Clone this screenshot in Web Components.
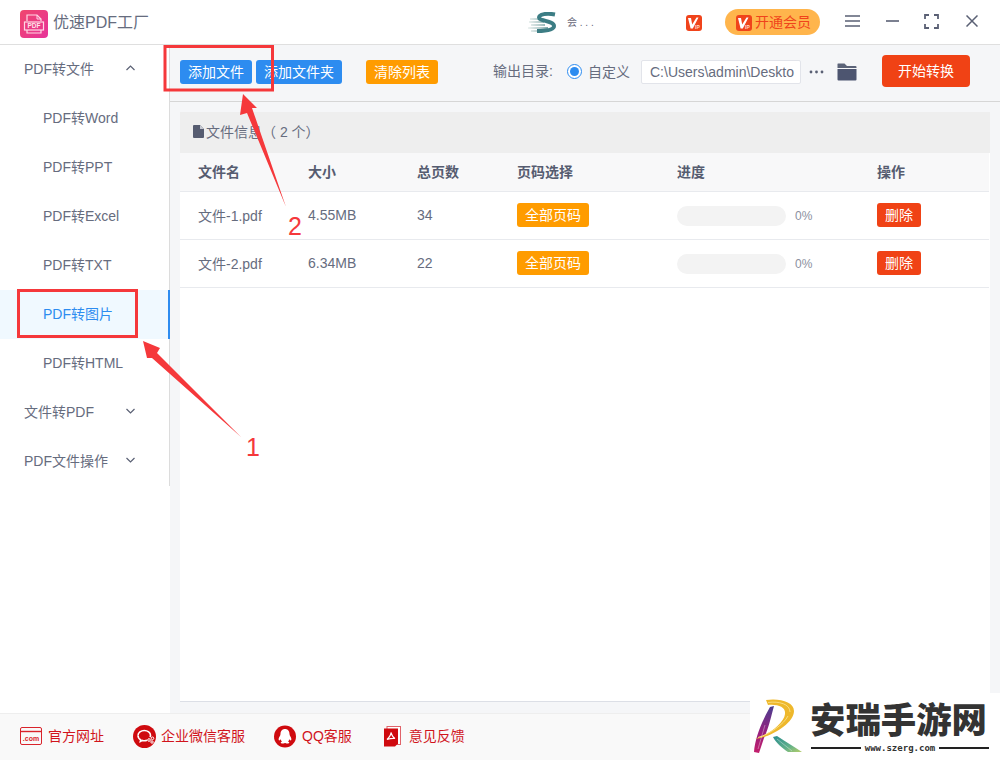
<!DOCTYPE html>
<html lang="zh">
<head>
<meta charset="utf-8">
<title>优速PDF工厂</title>
<style>
  html, body {
    margin: 0;
    background: #fff;
  }
</style>
</head>
<body>
<app-window>
  <title-bar slot="top"></title-bar>
  <side-nav slot="side">
    <nav-item kind="group" arrow="up">PDF转文件</nav-item>
    <nav-item>PDF转Word</nav-item>
    <nav-item>PDF转PPT</nav-item>
    <nav-item>PDF转Excel</nav-item>
    <nav-item>PDF转TXT</nav-item>
    <nav-item active>PDF转图片</nav-item>
    <nav-item>PDF转HTML</nav-item>
    <nav-item kind="group" arrow="down">文件转PDF</nav-item>
    <nav-item kind="group" arrow="down">PDF文件操作</nav-item>
  </side-nav>
  <tool-bar slot="tools"></tool-bar>
  <file-panel slot="content">
    <file-row name="文件-1.pdf" size="4.55MB" pages="34"></file-row>
    <file-row name="文件-2.pdf" size="6.34MB" pages="22"></file-row>
  </file-panel>
  <foot-bar slot="bottom">
    <foot-link icon="web">官方网址</foot-link>
    <foot-link icon="wechat">企业微信客服</foot-link>
    <foot-link icon="qq">QQ客服</foot-link>
    <foot-link icon="doc">意见反馈</foot-link>
  </foot-bar>
  <site-mark slot="over"></site-mark>
  <mark-overlay slot="over"></mark-overlay>
</app-window>

<script>
const FONT = '"Liberation Sans", "Noto Sans CJK SC", sans-serif'

const vipIcon = `<svg viewBox="0 0 16 16" width="16" height="16">
  <rect x="0" y="0" width="16" height="16" rx="3" fill="#f0431b"/>
  <path d="M2 3h3l1.200 6.500L10.500 2.500h2L6.800 13.500H4.600z" fill="#fff"/>
  <text x="9" y="13.500" font-size="5" font-weight="700" fill="#ffd9c8" font-family="Liberation Sans">IP</text>
</svg>`

class AppWindow extends HTMLElement {
  static body = `<style>
    :host {
      display: grid;
      position: relative;
      width: 1000px;
      height: 760px;
      overflow: hidden;
      grid-template-columns: 170px 1fr;
      grid-template-rows: 45px 57px 1fr 47px;
      font-family: ${FONT};
      color: #5e6478;
      background: #f5f6f8;
    }
    .top { grid-column: 1 / 3; grid-row: 1; display: grid; }
    .side { grid-column: 1; grid-row: 2 / 4; display: grid; background: #fff; }
    .tools { grid-column: 2; grid-row: 2; display: grid; }
    .content { grid-column: 2; grid-row: 3; display: grid; min-height: 0; }
    .bottom { grid-column: 1 / 3; grid-row: 4; display: grid; }
  </style>
  <div class="top"><slot name="top"></slot></div>
  <div class="side"><slot name="side"></slot></div>
  <div class="tools"><slot name="tools"></slot></div>
  <div class="content"><slot name="content"></slot></div>
  <div class="bottom"><slot name="bottom"></slot></div>
  <slot name="over"></slot>`

  constructor() {
    super()
    this.attachShadow({mode: 'open'})
    this.shadowRoot.innerHTML = AppWindow.body
  }
}

class TitleBar extends HTMLElement {
  static body = `<style>
    :host {
      display: flex;
      align-items: center;
      height: 45px;
      box-sizing: border-box;
      padding-bottom: 2px;
      background: #fff;
      border-bottom: 1px solid #dfdfdf;
    }
    .logo { margin: 5px 0 0 20px; display: block; }
    .name { margin-left: 5px; font-size: 16px; color: #666c7e; }
    .brand { margin: 3px 0 0 379px; display: block; }
    .user { margin-left: 10px; width: 34px; font-size: 10px; color: #667; white-space: nowrap; }
    .vip { margin: 3px 0 0 85px; display: flex; }
    .pill {
      margin: 1px 0 0 23px;
      width: 95px;
      height: 26px;
      box-sizing: border-box;
      padding: 0 0 2px 11px;
      display: flex;
      align-items: center;
      gap: 3px;
      border-radius: 13px;
      background: #ffb54c;
      color: #f0431b;
      font-size: 14px;
      white-space: nowrap;
    }
    .pill svg { display: block; flex: none; margin-top: 4px; }
    .ctl { display: block; fill: none; stroke: #5a6074; }
  </style>
  <svg class="logo" width="28" height="28" viewBox="0 0 28 28">
    <defs>
      <linearGradient id="lg" x1="0" y1="0" x2="1" y2="1">
        <stop offset="0" stop-color="#f0476d"/><stop offset="1" stop-color="#e7339a"/>
      </linearGradient>
    </defs>
    <rect width="28" height="28" rx="4" fill="url(#lg)"/>
    <path d="M7 11V5h10l4 4v2M7 20v3h14v-3" fill="none" stroke="#ffd7e4" stroke-width="1.2"/>
    <path d="M17 5v4h4" fill="none" stroke="#ffd7e4" stroke-width="1"/>
    <rect x="4.5" y="12" width="19" height="8" fill="none" stroke="#ffd7e4" stroke-width="1.2"/>
    <text x="14" y="18.4" text-anchor="middle" font-size="6.5" font-weight="700" fill="#ffe3ec" font-family="Liberation Sans">PDF</text>
  </svg>
  <div class="name">优速PDF工厂</div>
  <svg class="brand" width="29" height="21" viewBox="0 0 29 21">
    <defs>
      <linearGradient id="sg" x1="0" y1="0" x2="1" y2="0">
        <stop offset="0" stop-color="#eef3f2"/><stop offset="0.7" stop-color="#a9c4c4"/><stop offset="1" stop-color="#6f9fa2"/>
      </linearGradient>
    </defs>
    <path d="M2 7h12M1 10h15M3 13h14M0 16h20M3 19h18" stroke="url(#sg)" stroke-width="2" fill="none"/>
    <path d="M27 2.500C19 1 11 2 11 5.500c0 3.500 15 3.500 15 8.500 0 4-9 5-17 5" fill="none" stroke="#3c7d84" stroke-width="4"/>
  </svg>
  <div class="user">会 . . .</div>
  <div class="vip">${vipIcon}</div>
  <div class="pill">${vipIcon}<span>开通会员</span></div>
  <svg class="ctl" style="margin-left:25px" width="15" height="12" viewBox="0 0 15 12" stroke-width="1.6"><path d="M0 1h15M0 6h15M0 11h15"/></svg>
  <svg class="ctl" style="margin-left:26px" width="13" height="12" viewBox="0 0 13 12" stroke-width="1.6"><path d="M0 6h13"/></svg>
  <svg class="ctl" style="margin-left:25px" width="15" height="15" viewBox="0 0 15 15" stroke-width="1.8"><path d="M1 5V1h4M10 1h4v4M14 10v4h-4M5 14H1v-4"/></svg>
  <svg class="ctl" style="margin-left:27px" width="12" height="12" viewBox="0 0 12 12" stroke-width="1.5"><path d="M0.5 0.5l11 11M11.500 0.5l-11 11"/></svg>`

  constructor() {
    super()
    this.attachShadow({mode: 'open'})
    this.shadowRoot.innerHTML = TitleBar.body
  }
}

class SideNav extends HTMLElement {
  static body = `<style>
    :host {
      display: block;
      background: #fff;
    }
    .list {
      border-right: 1px solid #dcdcdc;
    }
  </style>
  <div class="list"><slot></slot></div>`

  constructor() {
    super()
    this.attachShadow({mode: 'open'})
    this.shadowRoot.innerHTML = SideNav.body
  }
}

class NavItem extends HTMLElement {
  static body = `<style>
    :host {
      display: flex;
      align-items: center;
      height: 49px;
      box-sizing: border-box;
      padding-left: 43px;
      padding-bottom: 4px;
      font-size: 14px;
      color: #666c7e;
      white-space: nowrap;
    }
    :host([kind="group"]) {
      padding-left: 24px;
      justify-content: space-between;
      padding-right: 34px;
    }
    :host([active]) {
      margin-right: -1px;
      color: #2d8cf0;
      background: #f0f9ff;
      border-right: 2px solid #2d8cf0;
    }
    svg { display: block; fill: none; stroke: #5a6074; stroke-width: 1.2; }
  </style>
  <slot></slot><span class="arrow"></span>`

  constructor() {
    super()
    this.attachShadow({mode: 'open'})
    this.shadowRoot.innerHTML = NavItem.body
  }

  connectedCallback() {
    const arrow = this.getAttribute('arrow')
    if (arrow) {
      const d = arrow === 'up' ? 'M.5 5L4.500 1l4 4' : 'M.5 1l4 4 4-4'
      this.shadowRoot.querySelector('.arrow').innerHTML =
        `<svg width="9" height="6" viewBox="0 0 9 6"><path d="${d}"/></svg>`
    }
  }
}

class UiButton extends HTMLElement {
  static body = `<style>
    :host {
      display: inline-flex;
      align-items: center;
      justify-content: center;
      height: 24px;
      box-sizing: border-box;
      padding-bottom: 2px;
      border-radius: 3px;
      background: var(--bg, #2d8cf0);
      color: #fff;
      font-size: 14px;
      white-space: nowrap;
    }
  </style>
  <slot></slot>`

  constructor() {
    super()
    this.attachShadow({mode: 'open'})
    this.shadowRoot.innerHTML = UiButton.body
  }
}

class ToolBar extends HTMLElement {
  static body = `<style>
    :host {
      display: flex;
      align-items: center;
      box-sizing: border-box;
      height: 57px;
      padding-left: 10px;
      background: #f5f6f8;
      border-bottom: 1px solid #d6d6d6;
      font-size: 14px;
      color: #666c7e;
      white-space: nowrap;
    }
    .add { width: 72px; margin-top: -2px; }
    .addf { width: 86px; margin-left: 4px; margin-top: -2px; --bg: #2d8cf0; }
    .clear { width: 72px; margin-left: 24px; margin-top: -2px; --bg: #ff9c00; }
    .label { margin-left: 55px; width: 74px; margin-top: -6px; }
    .radio {
      width: 15px;
      height: 15px;
      box-sizing: border-box;
      border: 1.5px solid #2d8cf0;
      border-radius: 50%;
      background: #fff;
      display: grid;
      place-items: center;
      margin-top: -3px;
    }
    .radio i {
      width: 9px;
      height: 9px;
      border-radius: 50%;
      background: #2d8cf0;
    }
    .custom { margin-left: 6px; margin-top: -5px; width: 53px; }
    .path {
      width: 160px;
      height: 24px;
      box-sizing: border-box;
      padding: 0 7px 0 8px;
      line-height: 23px;
      overflow: hidden;
      background: #fff;
      border: 1px solid #e2e4ea;
      border-radius: 2px;
      margin-top: -3px;
      color: #666c7e;
    }
    .dots { margin-left: 8px; margin-top: -3px; display: block; }
    .folder { margin-left: 13px; margin-top: -3px; display: block; }
    .start { width: 88px; height: 32px; margin-left: 25px; margin-top: -4px; border-radius: 4px; --bg: #f04215; }
  </style>
  <ui-button class="add">添加文件</ui-button>
  <ui-button class="addf">添加文件夹</ui-button>
  <ui-button class="clear">清除列表</ui-button>
  <span class="label">输出目录:</span>
  <span class="radio"><i></i></span>
  <span class="custom">自定义</span>
  <div class="path">C:\\Users\\admin\\Deskto</div>
  <svg class="dots" width="15" height="4" viewBox="0 0 15 4" fill="#5a6074"><circle cx="2" cy="2" r="1.4"/><circle cx="7.5" cy="2" r="1.4"/><circle cx="13" cy="2" r="1.4"/></svg>
  <svg class="folder" width="20" height="18" viewBox="0 0 20 18"><path d="M1 0.5h6.5L10 3h8.5a1 1 0 0 1 1 1v1H0.5V1a.5.5 0 0 1 .5-.5z" fill="#5b6378"/><path d="M0.5 6h19v10.5a1 1 0 0 1-1 1h-17a1 1 0 0 1-1-1z" fill="#4d5570"/></svg>
  <ui-button class="start">开始转换</ui-button>`

  constructor() {
    super()
    this.attachShadow({mode: 'open'})
    this.shadowRoot.innerHTML = ToolBar.body
  }
}

const COLUMNS = '110px 109px 100px 160px 200px 1fr'

class FilePanel extends HTMLElement {
  static body = `<style>
    :host {
      display: block;
      padding: 10px 10px 11px;
      min-height: 0;
    }
    .card {
      height: 100%;
      box-sizing: border-box;
      background: #fff;
      border-bottom: 1px solid #dcdfe6;
    }
    .info {
      display: flex;
      align-items: center;
      height: 41px;
      box-sizing: border-box;
      padding: 0 0 3px 13px;
      gap: 2px;
      background: #eeeeee;
      font-size: 14px;
      color: #666c7e;
    }
    .info svg { display: block; margin-top: 1px; }
    .head {
      display: grid;
      grid-template-columns: ${COLUMNS};
      align-items: center;
      height: 39px;
      box-sizing: border-box;
      margin-right: 1px;
      padding: 0 0 2px 18px;
      background: #f8f8f9;
      border-bottom: 1px solid #e8eaee;
      font-size: 14px;
      font-weight: 700;
      color: #565c70;
    }
  </style>
  <div class="card">
    <div class="info">
      <svg width="11" height="13" viewBox="0 0 11 13"><path d="M1 0h6l4 4v8a1 1 0 0 1-1 1H1a1 1 0 0 1-1-1V1a1 1 0 0 1 1-1z" fill="#565c70"/><path d="M7 0v4h4z" fill="#c6c9d2"/></svg>
      <span>文件信息（ 2 个）</span>
    </div>
    <div class="head">
      <span>文件名</span><span>大小</span><span>总页数</span><span>页码选择</span><span>进度</span><span>操作</span>
    </div>
    <slot></slot>
  </div>`

  constructor() {
    super()
    this.attachShadow({mode: 'open'})
    this.shadowRoot.innerHTML = FilePanel.body
  }
}

class FileRow extends HTMLElement {
  static body = `<style>
    :host {
      display: grid;
      grid-template-columns: ${COLUMNS};
      align-items: center;
      height: 48px;
      box-sizing: border-box;
      margin-right: 1px;
      padding: 0 0 1px 18px;
      background: #fff;
      border-bottom: 1px solid #e8eaee;
      font-size: 14px;
      color: #666c7e;
    }
    .cell { display: flex; }
    .all { width: 72px; --bg: #ff9c00; }
    .del { width: 44px; --bg: #f04215; }
    .progress {
      display: flex;
      align-items: center;
      gap: 9px;
      margin-top: 2px;
    }
    .track {
      width: 109px;
      height: 20px;
      border-radius: 10px;
      background: #f3f3f3;
    }
    .pct { font-size: 12px; color: #8b90a0; }
  </style>
  <span class="name"></span>
  <span class="size"></span>
  <span class="pages"></span>
  <span class="cell"><ui-button class="all">全部页码</ui-button></span>
  <div class="progress"><div class="track"></div><span class="pct">0%</span></div>
  <span class="cell"><ui-button class="del">删除</ui-button></span>`

  constructor() {
    super()
    this.attachShadow({mode: 'open'})
    this.shadowRoot.innerHTML = FileRow.body
  }

  connectedCallback() {
    for (const key of ['name', 'size', 'pages']) {
      this.shadowRoot.querySelector('.' + key).textContent = this.getAttribute(key)
    }
  }
}

class FootBar extends HTMLElement {
  static body = `<style>
    :host {
      display: flex;
      align-items: center;
      height: 47px;
      box-sizing: border-box;
      padding: 0 0 4px 20px;
      gap: 29px;
      background: #f9f9f9;
      border-top: 1px solid #eeeeee;
    }
  </style>
  <slot></slot>`

  constructor() {
    super()
    this.attachShadow({mode: 'open'})
    this.shadowRoot.innerHTML = FootBar.body
  }
}

const FOOT_ICONS = {
  web: `<svg width="22" height="18" viewBox="0 0 22 18" fill="none" stroke="#d9232b">
    <rect x="0.5" y="0.5" width="21" height="17" rx="1.5"/>
    <path d="M0.5 4.5h21" stroke-width="1.4"/>
    <text x="11" y="13.6" text-anchor="middle" font-size="7" font-weight="700" fill="#d9232b" stroke="none" font-family="Liberation Sans">.com</text>
  </svg>`,
  wechat: `<svg width="23" height="23" viewBox="0 0 23 23">
    <circle cx="11.5" cy="11.5" r="11.5" fill="#cf0a0f"/>
    <path d="M5 10.5c0-3 3-5 6.3-5s6.2 2 6.2 4.8c0 .7-.2 1.3-.5 1.8" fill="none" stroke="#fff" stroke-width="1.6"/>
    <path d="M5 10.5c0 2 1 3.3 2.6 4.2l-.3 1.8 2.2-1.1c1.5.4 3.3.3 4.6-.2" fill="none" stroke="#fff" stroke-width="1.6"/>
    <circle cx="16" cy="15" r="1.3" fill="none" stroke="#fff"/>
    <circle cx="19.5" cy="13.3" r="1.3" fill="none" stroke="#fff"/>
    <circle cx="19" cy="17" r="1.2" fill="none" stroke="#fff"/>
  </svg>`,
  qq: `<svg width="22" height="23" viewBox="0 0 22 23">
    <circle cx="11" cy="11.5" r="11" fill="#cf0a0f"/>
    <path d="M11 4c3 0 4.5 2.3 4.5 5 0 1 .3 1.5.9 2.500.8 1.400 1.300 3 .7 3.800-.5.500-1.200-.2-1.700-1-.2 1-.7 1.800-1.400 2.300.8.400 1.300.8 1.300 1.200 0 .6-1.500.9-2.800.7-.9-.1-1.300-.4-1.500-.4s-.6.300-1.500.4c-1.300.2-2.800-.1-2.800-.7 0-.4.500-.8 1.300-1.200-.7-.5-1.200-1.300-1.400-2.300-.5.800-1.200 1.500-1.700 1-.6-.8-.1-2.400.7-3.800.6-1 .9-1.500.9-2.500C6.500 6.300 8 4 11 4z" fill="#fff"/>
  </svg>`,
  doc: `<svg width="17" height="21" viewBox="0 0 17 21">
    <rect x="3" y="0.500" width="13.500" height="18" fill="#fff" stroke="#e0636a"/>
    <path d="M0 2.500h14v15l-3 3H0z" fill="#cf0a0f"/>
    <path d="M7 6.500c0 2.500-2 5-4 7 3-1 5-1.500 8-1-2-1-3.200-3.500-4-6z" fill="none" stroke="#fff" stroke-width="1.200"/>
  </svg>`
}

class FootLink extends HTMLElement {
  static body = `<style>
    :host {
      display: flex;
      align-items: center;
      gap: 6px;
      font-size: 14px;
      color: #d1141c;
      white-space: nowrap;
    }
    :host([icon="wechat"]) { gap: 5px; }
    :host([icon="doc"]) { margin-left: 3px; gap: 8px; }
    .icon { display: flex; margin-top: 2px; }
  </style>
  <span class="icon"></span><slot></slot>`

  constructor() {
    super()
    this.attachShadow({mode: 'open'})
    this.shadowRoot.innerHTML = FootLink.body
  }

  connectedCallback() {
    this.shadowRoot.querySelector('.icon').innerHTML = FOOT_ICONS[this.getAttribute('icon')]
  }
}

// site watermark pasted over the bottom right corner of the screenshot
class SiteMark extends HTMLElement {
  static body = `<style>
    :host {
      position: absolute;
      left: 750px;
      top: 693px;
      width: 250px;
      height: 67px;
      background: #fff;
    }
    svg { position: absolute; left: 0; top: 0; }
    .title {
      position: absolute;
      left: 60px;
      top: 5px;
      font-family: "Noto Sans CJK SC", sans-serif;
      font-size: 35.400px;
      line-height: 40px;
      font-weight: 900;
      color: #333;
      white-space: nowrap;
    }
    .url {
      position: absolute;
      left: 61px;
      top: 48px;
      width: 178px;
      display: flex;
      align-items: center;
      gap: 4px;
      font-family: "DejaVu Sans Mono", monospace;
      font-size: 9px;
      line-height: 14px;
      font-weight: 700;
      color: #333;
      white-space: nowrap;
    }
    .url i { flex: 1; height: 1.500px; background: #222; }
  </style>
  <svg width="60" height="67" viewBox="0 0 60 67">
    <defs>
      <linearGradient id="py" x1="0" y1="0" x2="0" y2="1">
        <stop offset="0" stop-color="#4a3f8f"/><stop offset="0.55" stop-color="#96207f"/><stop offset="1" stop-color="#c41f6c"/>
      </linearGradient>
      <linearGradient id="gr" x1="0" y1="0" x2="1" y2="1">
        <stop offset="0" stop-color="#2b8d8e"/><stop offset="0.6" stop-color="#5fb08a"/><stop offset="1" stop-color="#b7cf6a"/>
      </linearGradient>
    </defs>
    <path d="M24 13C21 24 19 34 14 45L9 60 4 59C5 45 12 28 20 14z" fill="url(#py)"/>
    <path d="M16 7C30 5 44 9 44 18 44 30 22 44 5 46 20 41 34 30 35 21 36 14 28 11 18 12z" fill="#eeb82c"/>
    <path d="M18 9.500C29 8 40 11 40 19M8 44.500C20 41 34 31 38 23" fill="none" stroke="#f8dd80" stroke-width="1"/>
    <path d="M23 44L27 43C35 48 44 54 52 59L38 59C32 55 26 50 23 44z" fill="url(#gr)"/>
    <path d="M27 46L42 58M15 32L8 56" fill="none" stroke="#fff" stroke-width=".6" opacity=".6"/>
  </svg>
  <div class="title">安瑞手游网</div>
  <div class="url"><i></i><span>www.szerg.com</span><i></i></div>`

  constructor() {
    super()
    this.attachShadow({mode: 'open'})
    this.shadowRoot.innerHTML = SiteMark.body
  }
}

// red annotations drawn on top of the app, coordinates are the window's
class MarkOverlay extends HTMLElement {
  static body = `<style>
    :host {
      position: absolute;
      left: 0;
      top: 0;
      width: 1000px;
      height: 760px;
      pointer-events: none;
    }
    svg { position: absolute; left: 0; top: 0; }
    .num {
      position: absolute;
      font-family: "Liberation Sans", sans-serif;
      font-size: 25px;
      line-height: 28px;
      color: #f5383b;
    }
  </style>
  <svg width="1000" height="760" viewBox="0 0 1000 760">
    <rect x="165" y="46.500" width="107.500" height="43.500" fill="none" stroke="#f5383b" stroke-width="3"/>
    <rect x="18.500" y="290.500" width="118" height="46" fill="none" stroke="#f5383b" stroke-width="3"/>
    <polygon points="143,341 160,348 157,353 241,437 152,358 147,358" fill="#f5383b"/>
    <polygon points="243,94 257,108 252,108 286,207 247,113 240,115" fill="#f5383b"/>
  </svg>
  <span class="num" style="left:246px;top:433px">1</span>
  <span class="num" style="left:288px;top:212px">2</span>`

  constructor() {
    super()
    this.attachShadow({mode: 'open'})
    this.shadowRoot.innerHTML = MarkOverlay.body
  }
}

customElements.define('app-window', AppWindow)
customElements.define('title-bar', TitleBar)
customElements.define('side-nav', SideNav)
customElements.define('nav-item', NavItem)
customElements.define('ui-button', UiButton)
customElements.define('tool-bar', ToolBar)
customElements.define('file-panel', FilePanel)
customElements.define('file-row', FileRow)
customElements.define('foot-bar', FootBar)
customElements.define('foot-link', FootLink)
customElements.define('site-mark', SiteMark)
customElements.define('mark-overlay', MarkOverlay)
</script>
</body>
</html>
